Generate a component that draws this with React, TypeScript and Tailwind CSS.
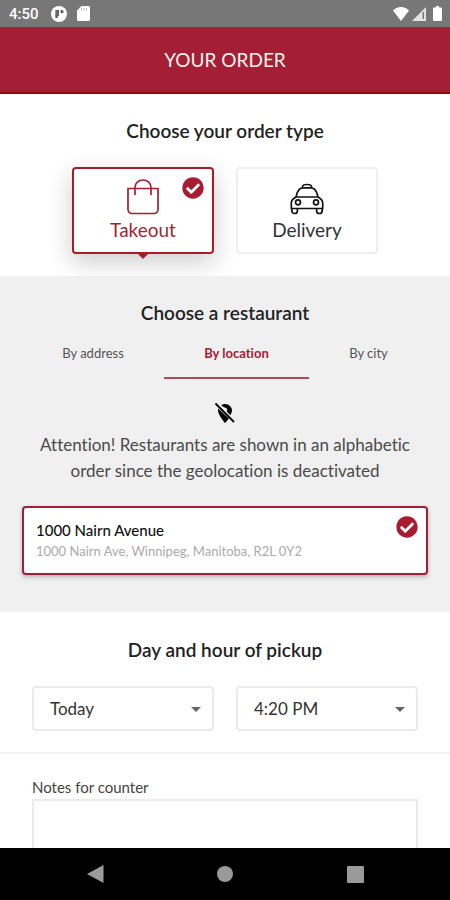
import { useState } from "react";
import type { ReactNode } from "react";
import { FaCheckCircle } from "react-icons/fa";
import { MdArrowDropDown } from "react-icons/md";

function BagIcon() {
  return (
    <svg width="32" height="36" viewBox="0 0 32 36" fill="none" stroke="currentColor" strokeWidth="1.7" aria-hidden="true">
      <path d="M1 9.500h30v21a4 4 0 0 1-4 4H5a4 4 0 0 1-4-4z" />
      <path d="M8 16V8.500C8 4 11.500 1 16 1s8 3 8 7.500V16" />
    </svg>
  );
}

function TaxiIcon() {
  return (
    <svg width="34" height="32" viewBox="0 0 34 32" fill="none" stroke="currentColor" strokeWidth="1.700" strokeLinejoin="round" aria-hidden="true">
      <path d="M12.500 4.800V3.600C12.500 2.200 14.500 1.500 17 1.500s4.500.7 4.500 2.100v1.200" />
      <path d="M6 14C6.500 11 7.800 8 9.500 6.200Q11 4.800 13.500 4.800h7q2.500 0 4 1.400C26.200 8 27.500 11 28 14z" />
      <path d="M6 14Q1.300 16.500 1.300 20v5.500h31.400V20Q32.700 16.500 28 14" />
      <circle cx="8" cy="19.300" r="2.500" />
      <circle cx="26" cy="19.300" r="2.500" />
      <path d="M1.800 25.500v2.200a2.800 2.800 0 0 0 5.600 0v-2.200M26.600 25.500v2.200a2.800 2.800 0 0 0 5.600 0v-2.200" />
    </svg>
  );
}

function LocationOffIcon() {
  return (
    <svg width="24" height="24" viewBox="0 0 24 24" className="mx-auto mt-[22px]" aria-hidden="true">
      <path d="M8 4.200A7 7 0 0 1 19 9c0 1.900-.7 3.600-1.700 5.300l-3.600-3.700A2.600 2.600 0 0 0 11.500 6.500z" fill="#000" />
      <path d="M5 7.500 15.800 17.500C14.300 19.800 12 22 12 22S5 14.500 5 9z" fill="#000" />
      <path d="M2.500 2.500 21 21" stroke="#000" strokeWidth="1.800" />
    </svg>
  );
}

function StatusBar() {
  return (
    <div className="flex h-[27px] shrink-0 items-center justify-between bg-[#777777] pr-2 pl-[9px] text-white">
      <div className="flex items-center gap-3">
        <span className="font-['Roboto',sans-serif] text-[15px] leading-5 font-medium">4:50</span>
        <svg width="16" height="16" viewBox="0 0 16 16" aria-hidden="true">
          <circle cx="8" cy="8" r="8" fill="#fff" />
          <path d="M4.300 4h3.700v6H6.800V12H4.300z" fill="#666" />
          <path d="M9.500 4h1.500a1.500 1.500 0 0 1 0 3.300H9.500z" fill="#666" />
        </svg>
        <svg width="13" height="15" viewBox="0 0 13 15" className="-ml-0.5" aria-hidden="true">
          <path d="M4.500 0h7A1.500 1.500 0 0 1 13 1.500v12a1.500 1.500 0 0 1-1.500 1.500h-10A1.500 1.500 0 0 1 0 13.500v-9z" fill="#fff" />
          <path d="M4.500 2v2.500M7 2v2.500M9.500 2v2.500" stroke="#bbb" strokeWidth="1" />
        </svg>
      </div>
      <div className="flex items-center gap-[3px]">
        <svg width="16" height="14" viewBox="0 0 16 14" aria-hidden="true">
          <path d="M8 14 0 3.500C2 1.500 5 0 8 0s6 1.500 8 3.500z" fill="#fff" />
        </svg>
        <svg width="14" height="14" viewBox="0 0 14 14" aria-hidden="true">
          <path d="M14 0v14H0z" fill="#e4e4e4" />
          <path d="M11.300 5v7" stroke="#777" strokeWidth="1.500" />
        </svg>
        <svg width="9" height="15" viewBox="0 0 9 15" className="ml-1" aria-hidden="true">
          <path d="M3 0h3v1.500h2a1 1 0 0 1 1 1V14a1 1 0 0 1-1 1H1a1 1 0 0 1-1-1V2.500a1 1 0 0 1 1-1h2z" fill="#fff" />
        </svg>
      </div>
    </div>
  );
}

function SectionTitle({ children }: { children: ReactNode }) {
  return <h2 className="text-center text-[19px] leading-6 font-semibold text-[#222222]">{children}</h2>;
}

type OrderTypeProps = {
  label: string;
  icon: ReactNode;
  selected: boolean;
  onSelect: () => void;
};

function OrderType({ label, icon, selected, onSelect }: OrderTypeProps) {
  return (
    <label
      className={
        selected
          ? "relative flex h-[87px] w-[142px] cursor-pointer flex-col items-center justify-end rounded-sm border-2 border-[#a81c28] bg-white pb-[10px] text-[#a81e35] shadow-[0_8px_24px_rgba(0,0,0,0.2)]"
          : "relative flex h-[87px] w-[142px] cursor-pointer flex-col items-center justify-end rounded-sm border-2 border-[#efefef] bg-white pb-[10px] text-[#111111]"
      }
    >
      <input type="radio" name="order-type" className="sr-only" checked={selected} onChange={onSelect} />
      {icon}
      <span className={selected ? "mt-[3px] text-[19px] leading-6" : "mt-[3px] text-[19px] leading-6 text-[#333333]"}>{label}</span>
      {selected && (
        <>
          <FaCheckCircle className="absolute top-2 right-2 size-[22px] text-[#a81c32]" aria-hidden="true" />
          <svg width="14" height="7" viewBox="0 0 14 7" className="absolute top-full left-1/2 -translate-x-1/2" aria-hidden="true">
            <path d="M0 0h14L7 7z" fill="#a81c28" />
          </svg>
        </>
      )}
    </label>
  );
}

function Select({ label, options }: { label: string; options: string[] }) {
  return (
    <div className="relative flex-1">
      <select
        aria-label={label}
        className="block h-[45px] w-full appearance-none rounded-sm border-2 border-[#ebebeb] bg-white px-4 text-[17px] leading-6 text-[#333333]"
      >
        {options.map((option) => (
          <option key={option}>{option}</option>
        ))}
      </select>
      <MdArrowDropDown className="pointer-events-none absolute top-[11px] right-[6px] size-6 text-[#666666]" aria-hidden="true" />
    </div>
  );
}

const tabs = ["By address", "By location", "By city"];

export default function App() {
  const [orderType, setOrderType] = useState("Takeout");
  const [tab, setTab] = useState("By location");

  return (
    <div className="flex h-screen flex-col overflow-hidden bg-white font-['Lato',sans-serif] [font-variant-ligatures:none]">
      <StatusBar />
      <header className="flex h-[67px] shrink-0 items-center justify-center border-b-2 border-[#a50010] bg-[#a41e35]">
        <h1 className="text-[19px] leading-6 text-[#fff4ec]">YOUR ORDER</h1>
      </header>

      <main className="min-h-0 flex-1 overflow-hidden">
        <section className="pt-[25px] pb-[22px]">
          <SectionTitle>Choose your order type</SectionTitle>
          <div className="mt-6 flex justify-center gap-[22px]">
            <OrderType label="Takeout" icon={<BagIcon />} selected={orderType === "Takeout"} onSelect={() => setOrderType("Takeout")} />
            <OrderType label="Delivery" icon={<TaxiIcon />} selected={orderType === "Delivery"} onSelect={() => setOrderType("Delivery")} />
          </div>
        </section>

        <section className="relative bg-[#f0f0f0] px-[22px] pt-[25px] pb-[37px]">
          <SectionTitle>Choose a restaurant</SectionTitle>
          <div role="tablist" className="mt-[18px] flex">
            {tabs.map((name) => (
              <button
                key={name}
                type="button"
                role="tab"
                aria-selected={tab === name}
                onClick={() => setTab(name)}
                className={
                  tab === name
                    ? "flex-auto border-b-2 border-[#b04a55] pt-[2px] pb-4 text-[13px] leading-4 font-bold text-[#a81c32]"
                    : "flex-auto border-b-2 border-transparent pt-[2px] pb-4 text-[13px] leading-4 text-[#555555]"
                }
              >
                {name}
              </button>
            ))}
          </div>
          <LocationOffIcon />
          <p className="mt-[7px] px-2 text-center text-[17px] leading-[26px] text-[#4a4a4a]">
            Attention! Restaurants are shown in an alphabetic order since the geolocation is deactivated
          </p>
          <button
            type="button"
            className="relative mt-[22px] block w-full rounded-sm border-2 border-[#a02038] bg-white px-3 pt-[11px] pb-3 text-left shadow-[0_2px_4px_rgba(0,0,0,0.25)]"
          >
            <span className="block text-[15px] leading-[22px] font-medium text-[#111111]">1000 Nairn Avenue</span>
            <span className="block text-[13px] leading-5 text-[#aaaaaa]">1000 Nairn Ave, Winnipeg, Manitoba, R2L 0Y2</span>
            <FaCheckCircle className="absolute top-2 right-2 size-[22px] text-[#a81c32]" aria-hidden="true" />
          </button>
        </section>

        <section className="border-b-2 border-[#f2f2f2] pt-[26px] pb-[21px]">
          <SectionTitle>Day and hour of pickup</SectionTitle>
          <div className="mt-6 flex gap-[22px] px-8">
            <Select label="Day" options={["Today", "Tomorrow"]} />
            <Select label="Hour" options={["4:20 PM", "4:30 PM", "4:40 PM"]} />
          </div>
        </section>

        <section className="px-8 pt-[21px]">
          <label htmlFor="notes" className="block text-[15px] leading-6 text-[#444444]">
            Notes for counter
          </label>
          <textarea id="notes" className="block h-24 w-full resize-none border-2 border-[#ebebeb] bg-white p-3 text-base" />
        </section>
      </main>

      <nav className="flex h-[52px] shrink-0 items-center justify-around bg-black px-[30px]">
        <button type="button" aria-label="Back" className="flex size-8 items-center justify-center">
          <svg width="17" height="18" viewBox="0 0 17 18" aria-hidden="true">
            <path d="M16.500 0v18L0 9z" fill="#9a9a9a" />
          </svg>
        </button>
        <button type="button" aria-label="Home" className="flex size-8 items-center justify-center">
          <span className="size-4 rounded-full bg-[#9a9a9a]" />
        </button>
        <button type="button" aria-label="Recent apps" className="flex size-8 items-center justify-center">
          <span className="size-[17px] rounded-[1px] bg-[#9a9a9a]" />
        </button>
      </nav>
    </div>
  );
}
